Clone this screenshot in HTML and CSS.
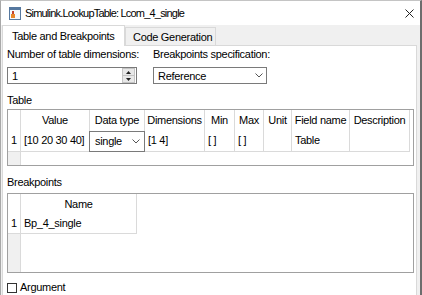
FILE: index.html
```html
<!DOCTYPE html>
<html lang="en">
<head>
    <meta charset="UTF-8">
    <title>Simulink.LookupTable: Lcom_4_single</title>
    <link rel="stylesheet" href="styles.css">
</head>
<body>

    <div class="window">
        <!-- Title bar -->
        <div class="titlebar">
            <svg class="app-icon" width="12" height="13" viewBox="0 0 12 13">
                <rect x="0.5" y="0.5" width="11" height="12" fill="#f4f7fb" stroke="#56789f"/>
                <rect x="1" y="1" width="10" height="2" fill="#56789f"/>
                <rect x="2" y="7" width="4" height="4" fill="#e8862a"/>
                <rect x="3" y="4" width="2" height="3" fill="#c2412d"/>
            </svg>
            <span class="title">Simulink.LookupTable: Lcom_4_single</span>
            <svg class="close-btn" width="9" height="9" viewBox="0 0 9 9">
                <path d="M0.5 0.5 L8.5 8.5 M8.5 0.5 L0.5 8.5" stroke="#222" stroke-width="1" fill="none"/>
            </svg>
        </div>

        <!-- Tabs -->
        <div class="tabs">
            <div class="tab active">Table and Breakpoints</div>
            <div class="tab">Code Generation</div>
        </div>

        <div class="panel">
            <div class="fields">
                <div class="field field-dims">
                    <div class="label">Number of table dimensions:</div>
                    <div class="spinbox">
                        <span class="spin-value">1</span>
                        <div class="spin">
                            <span class="spin-btn">
                                <svg width="5" height="3" viewBox="0 0 5 3"><path d="M2.5 0 L5 3 L0 3 Z" fill="#222"/></svg>
                            </span>
                            <span class="spin-btn">
                                <svg width="5" height="3" viewBox="0 0 5 3"><path d="M0 0 L5 0 L2.5 3 Z" fill="#222"/></svg>
                            </span>
                        </div>
                    </div>
                </div>
                <div class="field field-spec">
                    <div class="label">Breakpoints specification:</div>
                    <div class="select">
                        <span>Reference</span>
                        <svg class="chevron" width="8" height="5" viewBox="0 0 8 5"><path d="M0.5 0.5 L4 4 L7.5 0.5" stroke="#555" fill="none"/></svg>
                    </div>
                </div>
            </div>

            <div class="section-label">Table</div>
            <div class="grid-box table-box">
                <div class="grid table-grid">
                    <div class="cell head"></div>
                    <div class="cell head">Value</div>
                    <div class="cell head">Data type</div>
                    <div class="cell head">Dimensions</div>
                    <div class="cell head">Min</div>
                    <div class="cell head">Max</div>
                    <div class="cell head">Unit</div>
                    <div class="cell head">Field name</div>
                    <div class="cell head">Description</div>

                    <div class="cell row-num data">1</div>
                    <div class="cell data">[10 20 30 40]</div>
                    <div class="cell data type-cell">
                        <div class="cell-select">
                            <span>single</span>
                            <svg class="chevron" width="8" height="5" viewBox="0 0 8 5"><path d="M0.5 0.5 L4 4 L7.5 0.5" stroke="#555" fill="none"/></svg>
                        </div>
                    </div>
                    <div class="cell data">[1 4]</div>
                    <div class="cell data">[ ]</div>
                    <div class="cell data">[ ]</div>
                    <div class="cell data"></div>
                    <div class="cell data">Table</div>
                    <div class="cell data"></div>
                </div>
            </div>

            <div class="section-label bp-label">Breakpoints</div>
            <div class="grid-box bp-box">
                <div class="grid bp-grid">
                    <div class="cell head"></div>
                    <div class="cell head">Name</div>
                    <div class="cell row-num data">1</div>
                    <div class="cell data">Bp_4_single</div>
                </div>
            </div>

            <label class="check-row">
                <span class="checkbox"></span>
                <span>Argument</span>
            </label>
        </div>
    </div>

</body>
</html>
```

FILE: styles.css
```css
/* Basic Reset */
* {
    margin: 0;
    padding: 0;
    box-sizing: border-box;
}

body {
    font-family: "Liberation Sans", Arial, sans-serif;
    font-size: 11px;
    letter-spacing: -0.3px;
    color: #000;
    background-color: #fff;
    width: 422px;
    height: 295px;
    overflow: hidden;
}

/* Dialog window */
.window {
    width: 422px;
    height: 295px;
    background-color: #f0f0f0;
    border-left: 1px solid #a8a8a8;
    border-top: 1px solid #c4c4c4;
    border-right: 2px solid #6d6d6d;
    display: flex;
    flex-direction: column;
    overflow: hidden;
}

.titlebar {
    height: 24px;
    background-color: #fff;
    display: flex;
    align-items: center;
    padding-left: 8px;
    padding-right: 6px;
    flex-shrink: 0;
}

.title {
    margin-left: 4px;
    letter-spacing: -0.8px;
    line-height: 15px;
}

.close-btn {
    margin-left: auto;
}

/* Tabs */
.tabs {
    height: 20px;
    display: flex;
    align-items: flex-end;
    padding-left: 1px;
    flex-shrink: 0;
}

.tab {
    height: 18px;
    width: 91px;
    padding: 2px 0 0 7px;
    line-height: 15px;
    border: 1px solid #d9d9d9;
    border-bottom: none;
    background-color: #f0f0f0;
    white-space: nowrap;
}

.tab.active {
    height: 21px;
    width: 123px;
    margin-bottom: -1px;
    padding: 3px 0 0 9px;
    background-color: #fff;
    position: relative;
    z-index: 1;
}

/* Tab panel */
.panel {
    flex: 1;
    margin: 0 3px 0 1px;
    background-color: #fff;
    border: 1px solid #d9d9d9;
    border-bottom: none;
    padding: 1px 2px 0 4px;
    display: flex;
    flex-direction: column;
}

.fields {
    display: flex;
    gap: 16px;
}

.label,
.section-label {
    line-height: 15px;
    white-space: nowrap;
}

.field-dims {
    width: 130px;
}

.field-spec {
    width: 114px;
}

.spinbox,
.select {
    margin-top: 5px;
    height: 17px;
    border: 1px solid #7a7a7a;
    display: flex;
    align-items: center;
    padding-left: 4px;
    background-color: #fff;
}

.spin {
    margin-left: auto;
    margin-right: 1px;
    width: 13px;
    height: 15px;
    display: flex;
    flex-direction: column;
}

.spin-btn {
    flex: 1;
    background-color: #e8e8e8;
    border: 1px solid #c4c4c4;
    display: flex;
    align-items: center;
    justify-content: center;
}

.spin-btn + .spin-btn {
    border-top: none;
}

.select .chevron {
    margin-left: auto;
    margin-right: 3px;
}

.section-label {
    margin-top: 9px;
}

/* Grid boxes (Table / Breakpoints) */
.grid-box {
    margin-top: 1px;
    border: 1px solid #a0a0a0;
    background: linear-gradient(to right, #f0f0f0 12px, #dadada 12px, #dadada 13px, #fff 13px);
}

.table-box {
    height: 57px;
}

.bp-label {
    margin-top: 9px;
}

.bp-box {
    margin-top: 3px;
    height: 80px;
}

.grid {
    display: grid;
}

.table-grid {
    grid-template-columns: 13px 69px 55px 60px 30px 29px 28px 58px 60px;
    grid-template-rows: 21px 21px;
}

.bp-grid {
    grid-template-columns: 13px 116px;
    grid-template-rows: 20px 20px;
}

.cell {
    background-color: #fff;
    border-right: 1px solid #dadada;
    white-space: nowrap;
    overflow: hidden;
    line-height: 19px;
}

.cell.head {
    text-align: center;
    padding-top: 1px;
}

.cell.data {
    border-bottom: 1px solid #dadada;
    padding-left: 3px;
}

.cell.row-num {
    padding-left: 0;
    text-align: center;
}

.type-cell {
    overflow: visible;
    position: relative;
}

.cell-select {
    position: absolute;
    left: -1px;
    top: 0;
    width: 56px;
    height: 21px;
    border: 1px solid #7a7a7a;
    background-color: #fff;
    display: flex;
    align-items: center;
    padding-left: 5px;
}

.cell-select .chevron {
    margin-left: auto;
    margin-right: 4px;
}

/* Argument checkbox */
.check-row {
    margin-top: 7px;
    display: flex;
    align-items: center;
    line-height: 15px;
}

.checkbox {
    width: 10px;
    height: 10px;
    border: 1px solid #333;
    margin-right: 3px;
    background-color: #fff;
}
```
